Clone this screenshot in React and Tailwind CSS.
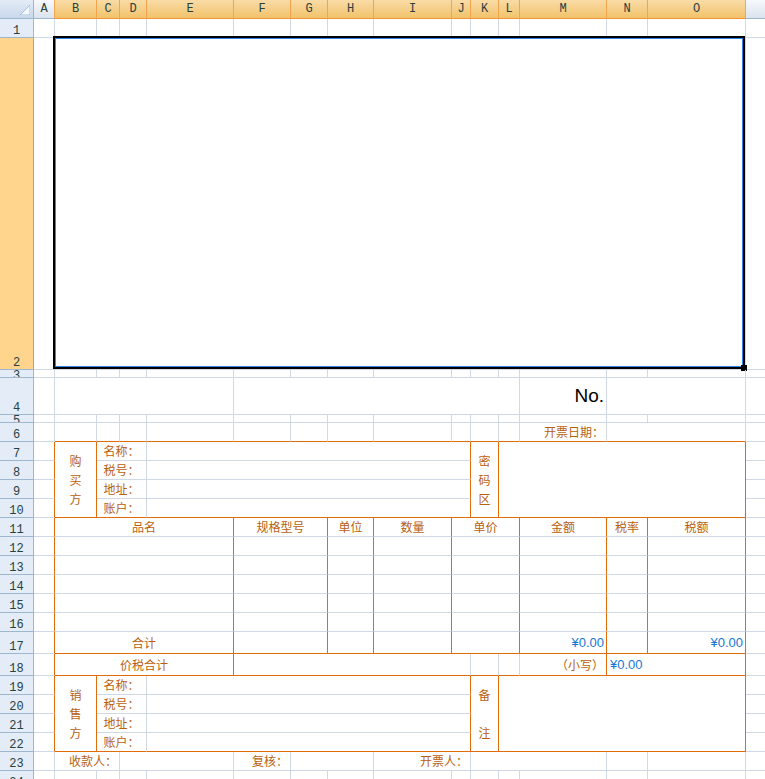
import React from 'react';

// gridline / invoice-line colours
const R = { g: 'border-r-[#d0d7e5]', o: 'border-r-[#e26b0a]' };
const B = { g: 'border-b-[#d0d7e5]', o: 'border-b-[#e26b0a]' };
const SPAN = { 1: '', 2: 'col-span-2', 3: 'col-span-3', 4: 'col-span-4', 5: 'col-span-5', 6: 'col-span-6', 7: 'col-span-7', 14: 'col-span-14' };
const RSPAN = { 1: '', 4: 'row-span-4' };
const ALIGN = { l: 'justify-start pl-[3px]', c: 'justify-center', r: 'justify-end pr-[2px]' };
const TONE = {
  o: "text-[12px] text-[#b85f10] font-['Noto_Sans_CJK_SC',sans-serif]",
  b: "text-[13px] text-[#1677d2] font-['Liberation_Sans','Noto_Sans_CJK_SC',sans-serif]",
  k: "text-[19px] text-black font-['Liberation_Sans',sans-serif]",
};

const LETTERS = ['A', 'B', 'C', 'D', 'E', 'F', 'G', 'H', 'I', 'J', 'K', 'L', 'M', 'N', 'O'];

const c = (span = 1, t = '', o = {}) => ({ span, t, ...o });
const blank = () => Array.from({ length: 15 }, () => c());

const item = (t = {}, last = false) => {
  const b = last ? 'o' : 'g';
  return [
    c(1, '', { r: 'o' }),
    c(4, t.name, { r: 'o', b }),
    c(2, t.spec, { r: 'o', b }),
    c(1, t.unit, { r: 'o', b }),
    c(1, t.qty, { r: 'o', b }),
    c(3, t.price, { r: 'o', b }),
    c(1, t.amt, { r: 'o', b, al: t.amtAl || 'c', tone: t.amtTone || 'o' }),
    c(1, t.rate, { r: 'o', b }),
    c(1, t.tax, { r: 'o', b, al: t.amtAl || 'c', tone: t.amtTone || 'o' }),
  ];
};

const party = (label, first, last, side, mid) => {
  const b = last ? 'o' : 'g';
  const row = [c(1, '', { r: 'o' })];
  if (first) row.push(c(1, '', { rs: 4, v: side, r: 'o', b: 'o' }));
  row.push(c(2, label, { b }));
  row.push(c(6, '', { r: 'o', b }));
  if (first) {
    row.push(c(1, '', { rs: 4, v: mid, r: 'o', b: 'o' }));
    row.push(c(4, '', { rs: 4, r: 'o', b: 'o' }));
  }
  return row;
};

const rows = [
  { n: 1, cells: blank() },
  { n: 2, sel: true, cells: [c(), c(14, '', { sel: true })] },
  { n: 3, short: true, cells: blank() },
  { n: 4, cells: [c(), c(4), c(7), c(1, 'No.', { al: 'r', tone: 'k' }), c(2)] },
  { n: 5, short: true, cells: blank() },
  {
    n: 6,
    cells: [
      c(),
      ...Array.from({ length: 11 }, () => c(1, '', { b: 'o' })),
      c(1, '开票日期：', { al: 'r', b: 'o' }),
      c(2, '', { b: 'o' }),
    ],
  },
  { n: 7, cells: party('名称：', true, false, ['购', '买', '方'], ['密', '码', '区']) },
  { n: 8, cells: party('税号：') },
  { n: 9, cells: party('地址：') },
  { n: 10, cells: party('账户：', false, true) },
  { n: 11, cells: item({ name: '品名', spec: '规格型号', unit: '单位', qty: '数量', price: '单价', amt: '金额', rate: '税率', tax: '税额' }) },
  { n: 12, cells: item() },
  { n: 13, cells: item() },
  { n: 14, cells: item() },
  { n: 15, cells: item() },
  { n: 16, cells: item() },
  { n: 17, cells: item({ name: '合计', amt: '¥0.00', tax: '¥0.00', amtAl: 'r', amtTone: 'b' }, true) },
  {
    n: 18,
    cells: [
      c(1, '', { r: 'o' }),
      c(4, '价税合计', { r: 'o', b: 'o' }),
      c(5, '', { b: 'o' }),
      c(1, '', { b: 'o' }),
      c(1, '', { b: 'o' }),
      c(1, '（小写）', { al: 'r', r: 'o', b: 'o' }),
      c(2, '¥0.00', { al: 'l', tone: 'b', r: 'o', b: 'o' }),
    ],
  },
  { n: 19, cells: party('名称：', true, false, ['销', '售', '方'], ['备', '', '注']) },
  { n: 20, cells: party('税号：') },
  { n: 21, cells: party('地址：') },
  { n: 22, cells: party('账户：', false, true) },
  {
    n: 23,
    cells: [c(), c(2, '收款人：', { al: 'r' }), c(2), c(1, '复核：', { al: 'r' }), c(2), c(2, '开票人：', { al: 'r' }), c(3), c(), c()],
  },
  { n: 24, cells: blank() },
];

function Cell({ span, rs = 1, t, r = 'g', b = 'g', al = 'c', tone = 'o', v, sel }) {
  return (
    <div
      className={`relative flex items-center whitespace-nowrap border-r border-b ${SPAN[span]} ${RSPAN[rs]} ${R[r]} ${B[b]} ${ALIGN[al]} ${TONE[tone]}`}
    >
      {v ? (
        <div className="flex flex-col items-center">
          {v.map((x, i) => (
            <span key={i} className="h-[19px] leading-[19px]">
              {x}
            </span>
          ))}
        </div>
      ) : (
        t
      )}
      {sel && (
        <>
          <div className="absolute -left-[2px] -top-[2px] right-0 bottom-0 border-2 border-black">
            <div className="absolute inset-0 border border-[#2f86ea]" />
          </div>
          <div className="absolute -right-[2px] -bottom-[2px] w-[6px] h-[6px] bg-black" />
        </>
      )}
    </div>
  );
}

function RowHead({ n, sel, short }) {
  return (
    <div
      className={`flex justify-center overflow-hidden border-r border-b border-b-[#9eb6ce] font-['Liberation_Mono',monospace] text-[12px] leading-[12px] text-[#27413e] ${
        sel ? 'bg-[#ffd58d] border-r-[#f29536]' : 'bg-[#e4ecf7] border-r-[#9eb6ce]'
      } ${short ? 'items-start' : 'items-end'}`}
    >
      {n}
    </div>
  );
}

export default function App() {
  return (
    <div className="w-[765px] h-[779px] overflow-hidden bg-white">
      <div className="grid grid-cols-[34px_21px_42px_23px_27px_87px_57px_37px_46px_78px_19px_28px_21px_87px_41px_98px_1fr] grid-rows-[19px_19px_332px_8px_37px_8px_19px_19px_19px_19px_19px_19px_19px_19px_19px_19px_19px_22px_22px_19px_19px_19px_19px_19px_19px]">
        {/* corner */}
        <div className="flex items-end justify-end pr-[3px] pb-[3px] bg-gradient-to-b from-[#e3ebf6] to-[#c9d8ec] border-r border-b border-[#9eb6ce]">
          <svg width="10" height="10" viewBox="0 0 10 10">
            <polygon points="10,0 10,10 0,10" fill="#f4f7fb" stroke="#a9bcd4" strokeWidth="1" />
          </svg>
        </div>
        {LETTERS.map((l) => {
          const on = l !== 'A';
          return (
            <div
              key={l}
              className={`flex items-center justify-center border-r border-b font-['Liberation_Mono',monospace] text-[12px] text-[#27413e] ${
                on
                  ? 'bg-gradient-to-b from-[#f9dca6] to-[#f2c26a] border-r-[#f0a54e] border-b-[#f29536]'
                  : 'bg-gradient-to-b from-[#f6f9fc] to-[#dbe3ee] border-r-[#f0a54e] border-b-[#9eb6ce]'
              }`}
            >
              {l}
            </div>
          );
        })}
        <div className="border-b border-b-[#9eb6ce] bg-gradient-to-b from-[#f6f9fc] to-[#dbe3ee]" />

        {rows.map((row) => (
          <React.Fragment key={row.n}>
            <RowHead n={row.n} sel={row.sel} short={row.short} />
            {row.cells.map((cell, i) => (
              <Cell key={i} {...cell} />
            ))}
            <div className="border-b border-b-[#d0d7e5]" />
          </React.Fragment>
        ))}
      </div>
    </div>
  );
}
